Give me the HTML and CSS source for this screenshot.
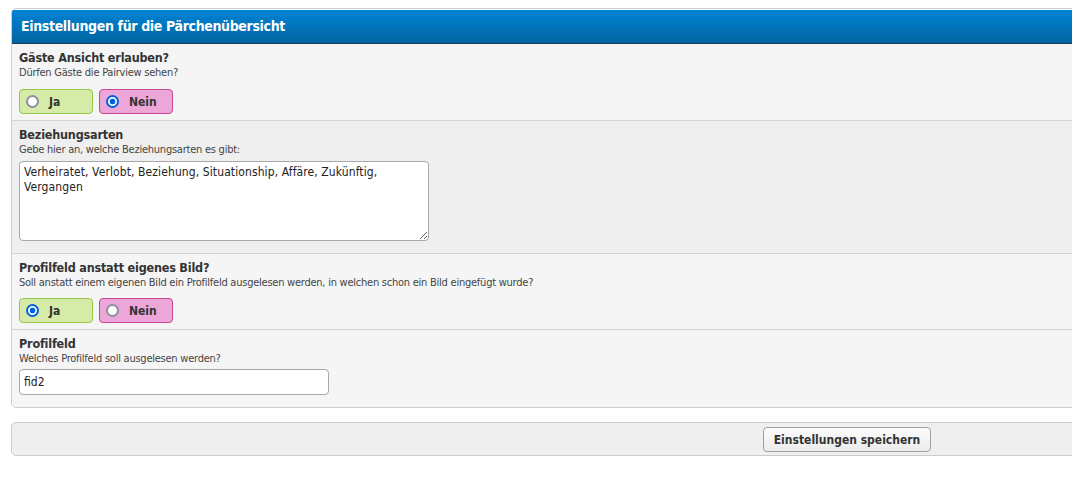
FILE: index.html
```html
<!DOCTYPE html>
<html lang="de">
<head>
<meta charset="utf-8">
<title>Einstellungen für die Pärchenübersicht</title>
<link rel="stylesheet" href="styles.css">
</head>
<body>
<form class="page">
  <div class="form-container">
    <div class="thead">Einstellungen für die Pärchenübersicht</div>

    <div class="row alt1">
      <div class="row-title">Gäste Ansicht erlauben?</div>
      <div class="row-desc">Dürfen Gäste die Pairview sehen?</div>
      <div class="yesno">
        <label class="choice yes"><span class="radio"></span>Ja</label>
        <label class="choice no"><span class="radio checked"></span>Nein</label>
      </div>
    </div>

    <div class="row alt2 tall">
      <div class="row-title">Beziehungsarten</div>
      <div class="row-desc">Gebe hier an, welche Beziehungsarten es gibt:</div>
      <textarea class="textarea">Verheiratet, Verlobt, Beziehung, Situationship, Affäre, Zukünftig, Vergangen</textarea>
    </div>

    <div class="row alt1">
      <div class="row-title">Profilfeld anstatt eigenes Bild?</div>
      <div class="row-desc">Soll anstatt einem eigenen Bild ein Profilfeld ausgelesen werden, in welchen schon ein Bild eingefügt wurde?</div>
      <div class="yesno tight">
        <label class="choice yes"><span class="radio checked"></span>Ja</label>
        <label class="choice no"><span class="radio"></span>Nein</label>
      </div>
    </div>

    <div class="row alt1 last">
      <div class="row-title">Profilfeld</div>
      <div class="row-desc">Welches Profilfeld soll ausgelesen werden?</div>
      <input class="text-input" type="text" value="fid2">
    </div>
  </div>

  <div class="form-buttons">
    <button class="submit" type="button">Einstellungen speichern</button>
  </div>
</form>
</body>
</html>
```

FILE: styles.css
```css
html {
  overflow: hidden;
}

body {
  margin: 0;
  background: #ffffff;
  color: #333333;
  font-family: "DejaVu Sans Condensed", "DejaVu Sans", Verdana, sans-serif;
  font-stretch: condensed;
  font-size: 12px;
}

.page {
  padding: 8px 0 0 11px;
}

.form-container {
  width: 1670px;
  border: 1px solid #cccccc;
  border-radius: 5px;
  padding: 1px 0 0 0;
  background: #ffffff;
  overflow: hidden;
}

.thead {
  height: 33px;
  line-height: 33px;
  padding: 0 9px;
  background: linear-gradient(to bottom, #0083d7 0%, #0065a0 100%);
  border-bottom: 1px solid #1f3b50;
  color: #ffffff;
  font-weight: bold;
  font-size: 14px;
  letter-spacing: -0.35px;
}

.row {
  padding: 6px 7px 6px 7px;
  border-bottom: 1px solid #d4d4d4;
}

.row.tall {
  padding-bottom: 12px;
}

.row.last {
  border-bottom: none;
  padding-bottom: 12px;
}

.alt1 {
  background: #f5f5f5;
}

.alt2 {
  background: #efefef;
}

.row-title {
  font-weight: bold;
  font-size: 12.5px;
  line-height: 16px;
  letter-spacing: -0.2px;
  color: #333333;
}

.row-desc {
  font-size: 11px;
  line-height: 13px;
  letter-spacing: -0.24px;
  color: #444444;
}

.yesno {
  display: flex;
  gap: 6px;
  margin-top: 10px;
}

.yesno.tight {
  margin-top: 9px;
}

.choice {
  display: flex;
  align-items: center;
  gap: 10px;
  box-sizing: border-box;
  width: 74px;
  height: 25px;
  padding: 0 0 0 6px;
  border: 1px solid;
  border-radius: 4px;
  font-weight: bold;
  font-size: 12px;
  color: #333333;
}

.choice.yes {
  background: #d6eba7;
  border-color: #93c84b;
}

.choice.no {
  background: #eca6d7;
  border-color: #c9478f;
}

.radio {
  box-sizing: border-box;
  width: 13px;
  height: 13px;
  border-radius: 50%;
  border: 2px solid #8f8f9d;
  background: #ffffff;
  flex: none;
}

.radio.checked {
  border: 2px solid #0060df;
  background: radial-gradient(circle, #0060df 0 2.6px, #ffffff 3.2px);
}

.textarea {
  display: block;
  box-sizing: border-box;
  width: 410px;
  height: 80px;
  margin-top: 5px;
  padding: 3px 4px;
  border: 1px solid #a8a8a8;
  border-radius: 4px;
  background: #ffffff;
  color: #222222;
  font-family: inherit;
  font-stretch: condensed;
  font-size: 12px;
  letter-spacing: 0.1px;
  line-height: 15px;
  resize: both;
}

.text-input {
  display: block;
  box-sizing: border-box;
  width: 310px;
  height: 26px;
  margin-top: 4px;
  padding: 2px 4px;
  border: 1px solid #a8a8a8;
  border-radius: 4px;
  background: #ffffff;
  color: #222222;
  font-family: inherit;
  font-stretch: condensed;
  font-size: 12px;
}

.form-buttons {
  width: 1670px;
  margin-top: 14px;
  padding: 4px 0 3px;
  border: 1px solid #cccccc;
  border-radius: 5px;
  background: #efefef;
  display: flex;
  justify-content: center;
}

.submit {
  height: 25px;
  padding: 0 10px;
  border: 1px solid #a0a0a0;
  border-radius: 4px;
  background: linear-gradient(to bottom, #fbfbfb, #ececec);
  color: #333333;
  font-family: inherit;
  font-stretch: condensed;
  font-weight: bold;
  font-size: 12px;
}
```
